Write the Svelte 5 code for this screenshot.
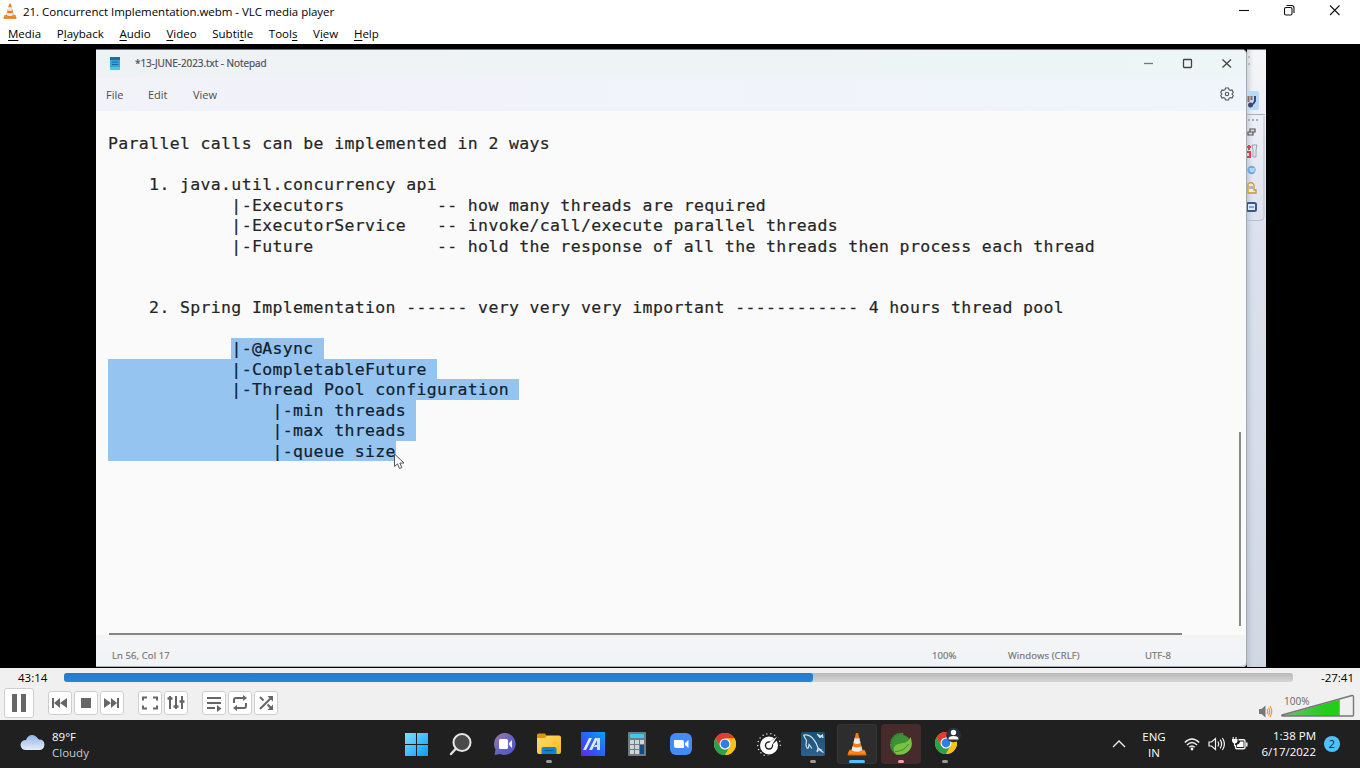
<script>
  const menus = [
    ['', 'M', 'edia'],
    ['P', 'l', 'ayback'],
    ['', 'A', 'udio'],
    ['', 'V', 'ideo'],
    ['Subti', 't', 'le'],
    ['Tool', 's', ''],
    ['V', 'i', 'ew'],
    ['', 'H', 'elp']
  ];
  const sp = (n) => ' '.repeat(n);
  const lines = [
    ['Parallel calls can be implemented in 2 ways', ''],
    ['', ''],
    [sp(4) + '1. java.util.concurrency api', ''],
    [sp(12) + '|-Executors' + sp(9) + '-- how many threads are required', ''],
    [sp(12) + '|-ExecutorService' + sp(3) + '-- invoke/call/execute parallel threads', ''],
    [sp(12) + '|-Future' + sp(12) + '-- hold the response of all the threads then process each thread', ''],
    ['', ''],
    ['', ''],
    [sp(4) + '2. Spring Implementation ------ very very very important ------------ 4 hours thread pool', ''],
    ['', ''],
    [sp(12), '|-@Async '],
    ['', sp(12) + '|-CompletableFuture '],
    ['', sp(12) + '|-Thread Pool configuration '],
    ['', sp(16) + '|-min threads '],
    ['', sp(16) + '|-max threads '],
    ['', sp(16) + '|-queue size']
  ];
  const apps = ['start', 'search', 'chat', 'files', 'ma', 'calc', 'zoom', 'chrome', 'gauge', 'mysql', 'vlc', 'spring', 'chrome2'];
  const running = { files: 'dot', mysql: 'dot', vlc: 'active', spring: 'alert', chrome2: 'dot' };
  const ticks = Array.from({ length: 14 }, (_, i) => 95 + i * 20.5);
  const teeth = Array.from({ length: 12 }, (_, i) => 120 + i * 14);
</script>

{#snippet cone()}
  <path d="M3 18.6h18l2.2 4.6q.3 1.3-.9 1.3H1.700q-1.200 0-.9-1.300z" fill="#e86c09" />
  <path d="M2.600 19.500h18.800l1 3H1.600z" fill="#ff9417" />
  <path d="M10.600 1.500q1.400-1.200 2.800 0l5.400 18.600q-6.800 4-13.600 0z" fill="#f47b0c" />
  <path d="M9.200 6.200q2.800 1.200 5.600 0l1.500 5.200q-4.300 2-8.600 0z" fill="#e9ebec" />
  <path d="M6.700 14.900q5.300 2.500 10.600 0l1.200 4q-6.500 3.400-13 0z" fill="#e9ebec" />
  <path d="M14.200 6.400l.6-.2 3.700 12.700-2.300 1z" fill="#999" opacity=".25" />
{/snippet}

{#snippet chromeLogo()}
  <circle cx="12" cy="12" r="11" fill="#fbc116" />
  <path d="M2.470 6.500A11 11 0 0 1 21.530 6.500H12L7.240 14.750z" fill="#e33b2e" />
  <path d="M2.470 6.500A11 11 0 0 0 12 23L16.760 14.750 12 17.500 7.240 14.750z" fill="#2aa24c" />
  <path d="M12 6.500h9.530A11 11 0 0 1 12 23l4.760-8.250z" fill="#fbc116" />
  <circle cx="12" cy="12" r="5.500" fill="#fff" />
  <circle cx="12" cy="12" r="4.400" fill="#2f7de9" />
{/snippet}

<div class="screen">
  <header class="titlebar">
    <svg class="logo" width="14" height="16" viewBox="0 0 24 25" preserveAspectRatio="none">{@render cone()}</svg>
    <span class="title">21. Concurrenct Implementation.webm - VLC media player</span>
    <svg class="winbtns" width="110" height="20" fill="none" stroke="#111" stroke-width="1.100">
      <path d="M4 10.500h10" />
      <rect x="49.500" y="7.500" width="7.500" height="7.500" rx="1.500" />
      <path d="M51.500 5.500h5q2.500 0 2.500 2.500v5" />
      <path d="M95 5.500l9.500 9.500M104.500 5.500l-9.500 9.500" />
    </svg>
  </header>

  <nav class="menubar">
    {#each menus as [a, b, c]}
      <span class="menu">{a}<u>{b}</u>{c}</span>
    {/each}
  </nav>

  <main class="video">
    <section class="notepad">
      <div class="np-title">
        <svg class="np-icon" width="12" height="15">
          <path d="M1 2h10v12H1z" fill="#37a4d5" /><path d="M1 1h10v3H1z" fill="#1b6f9c" /><path d="M3 6h6M3 8.500h6" stroke="#176c98" /><path d="M1 11h10v3H1z" fill="#4cc4ec" />
        </svg>
        <span class="np-name">*13-JUNE-2023.txt - Notepad</span>
        <svg class="np-btns" width="100" height="20" fill="none" stroke="#444" stroke-width="1.300">
          <path d="M4 10.500h9" stroke="#777" />
          <rect x="43.500" y="6.500" width="8" height="8" rx=".8" />
          <path d="M82.500 6.500l8.500 8M91 6.500l-8.500 8" />
        </svg>
      </div>
      <div class="np-menu">
        <span class="f">File</span><span class="e">Edit</span><span class="v">View</span>
        <svg class="gear" width="14" height="14" viewBox="0 0 14 14" fill="none" stroke="#555" stroke-width="1.100">
          <path d="M5.500 1h3l.5 1.700 1.300.7 1.700-.4 1.300 2.500L12 7l1.300 1.500L12 11l-1.700-.4-1.300.7-.5 1.700h-3L5 11.300l-1.300-.7L2 11 .7 8.500 2 7 .7 5.500 2 3l1.700.4L5 2.700z" />
          <circle cx="7" cy="7" r="1.700" />
        </svg>
      </div>
      <div class="np-body">
        <div class="text">
          {#each lines as [plain, selected]}
            <div class="line"><span>{plain}</span><span class="sel">{selected}</span></div>
          {/each}
        </div>
        <div class="vbar"></div>
      </div>
      <div class="hbar"></div>
      <footer class="status">
        <span class="pos">Ln 56, Col 17</span><span class="pct">100%</span><span class="crlf">Windows (CRLF)</span><span class="utf">UTF-8</span>
      </footer>
      <svg class="cursor" width="13" height="18" viewBox="0 0 13 18">
        <path d="M1.500 1v12.500l3-2.700 2 4.700 2.300-1-2-4.500h4.200z" fill="#fff" stroke="#555" />
      </svg>
    </section>
    <aside class="ide">
      <svg width="19" height="172">
        <path d="M1 7h2M1 14h2" stroke="#999" />
        <rect x="-3" y="41" width="15" height="19" rx="2" fill="#b9daf7" />
        <path d="M1.500 46v6M4.500 46v4" stroke="#8a6a58" stroke-width="2" /><path d="M8 46v5q-1 3-4 4" stroke="#34498c" stroke-width="2" fill="none" /><circle cx="3.500" cy="55" r="2.500" fill="#4a4468" />
        <path d="M0 64.500h18" stroke="#a9b1bd" />
        <path d="M1 70h2m2 0h2m2 0h2" stroke="#999" stroke-width="1.500" />
        <path d="M3 79h5v3H3zM1 82h5v3H1z" fill="#ddd" stroke="#555" stroke-width="1.200" />
        <path d="M0 97h4M2 95v5M0 102h3v5H0" stroke="#dc3f4d" stroke-width="2" fill="none" /><path d="M5 95h5l-1 5v7H6v-7z" fill="#e5e7ee" stroke="#9aa0b4" />
        <circle cx="4.500" cy="120" r="4.200" fill="#6eaadb" /><path d="M2 119h6M3 121h5M4 118v4M6 118v4" stroke="#e5f2ff" stroke-width=".7" />
        <path d="M1 134q4-3 6 1v5h2v3H1z" fill="#f4eccd" stroke="#c59b34" stroke-width="1.300" /><path d="M3 136v3M5 136v3" stroke="#5b88b5" />
        <rect x="0" y="153" width="9" height="8" rx="1.500" fill="#dce9fb" stroke="#385887" stroke-width="2" /><path d="M2 157h5" stroke="#385887" />
        <path d="M0 170.500h13q4 0 4-4V66" stroke="#b8bfca" fill="none" />
      </svg>
    </aside>
  </main>

  <section class="player">
    <div class="seek">
      <span class="elapsed">43:14</span>
      <div class="track"><div class="played"></div></div>
      <span class="remain">-27:41</span>
    </div>
    <div class="controls">
      <button class="big" aria-label="Pause"><svg width="28" height="28"><path d="M7 5h5v18H7zM16 5h5v18h-5z" fill="#666" /></svg></button>
      <div class="group">
        <button aria-label="Previous"><svg width="22" height="22"><path d="M3 6h2v10H3zM11 6v10l-6-5zM18 6v10l-7-5z" fill="#666" /></svg></button>
        <button aria-label="Stop"><svg width="22" height="22"><path d="M6 6h10v10H6z" fill="#666" /></svg></button>
        <button aria-label="Next"><svg width="22" height="22"><path d="M16 6h2v10h-2zM10 6v10l6-5zM3 6v10l7-5z" fill="#666" /></svg></button>
      </div>
      <div class="group">
        <button aria-label="Fullscreen"><svg width="22" height="22" fill="none" stroke="#666" stroke-width="2"><path d="M4 8.500V5.500h4M14 5.500h4v3M18 13.500v3h-4M8 16.500H4v-3" /></svg></button>
        <button aria-label="Settings"><svg width="22" height="22" fill="none" stroke="#666" stroke-width="2"><path d="M5 4v13M11 4v13M17 4v13" /><path d="M2.500 6.500h5M8.500 14.500h5M14.500 9.500h5" stroke-width="2.500" /></svg></button>
      </div>
      <div class="group">
        <button aria-label="Playlist"><svg width="22" height="22" fill="none" stroke="#666" stroke-width="2"><path d="M4 6h14M4 11h14M4 16h8" /><path d="M14 13l4.500 3.500-4.500 3.500z" fill="#666" stroke="none" /></svg></button>
        <button aria-label="Loop"><svg width="22" height="22" fill="none" stroke="#666" stroke-width="2"><path d="M5 11V8q0-2 2-2h8M17 11v3q0 2-2 2H7" /><path d="M14 3l4 3-4 3zM8 13l-4 3 4 3z" fill="#666" stroke="none" /></svg></button>
        <button aria-label="Shuffle"><svg width="22" height="22" fill="none" stroke="#666" stroke-width="2"><path d="M5 5l3.500 3.500M12.500 12.500l4 4M5 17L16.500 5.500" /><path d="M12.500 4H18v5.500zM12.500 18H18v-5.500z" fill="#666" stroke="none" /></svg></button>
      </div>
      <div class="volume">
        <svg class="speaker" width="14" height="13" fill="none"><path d="M0 4h2.500L6.500.5v12L2.500 9H0z" fill="#777" /><path d="M8 4q1.500 2.500 0 5M9.500 2.500q2.500 4 0 8M11 1q3.500 5.500 0 11" stroke="#ed9a32" stroke-width="1.200" /></svg>
        <div class="wedge">
          <svg width="75" height="24">
            <defs><linearGradient id="vol"><stop offset="0" stop-color="#75b975" /><stop offset=".75" stop-color="#22cd1d" /><stop offset=".97" stop-color="#20d018" /><stop offset="1" stop-color="#a1c718" /></linearGradient></defs>
            <path d="M2 21.500L60 5.500V22H2z" fill="url(#vol)" />
            <path d="M2 21L72 1.500q1.500-.3 1.500 1.500v18q0 1-1 1H3q-2 0-1-1z" fill="none" stroke="#777" stroke-width="1.400" />
          </svg>
          <span>100%</span>
        </div>
      </div>
    </div>
  </section>

  <footer class="taskbar">
    <div class="weather">
      <svg width="25" height="17" viewBox="0 0 25 17">
        <defs><linearGradient id="cl" x2="0" y2="1"><stop offset="0" stop-color="#8db4ea" /><stop offset="1" stop-color="#e6edf7" /></linearGradient></defs>
        <path d="M6 6Q8 1 12 1t6.500 4.500Q24 5 24.500 10.500 24 16 19 16H6Q1 16 .5 11 1 6 6 6z" fill="url(#cl)" />
        <path d="M7 6q4 0 6 4 2-4 6-4.300" stroke="#b5cbec" fill="none" />
      </svg>
      <div class="wtext"><span class="deg">89°F</span><span class="cloudy">Cloudy</span></div>
    </div>

    <div class="apps">
      {#each apps as app}
        <div class="app {app}">
          {#if app === 'start'}
            <svg width="24" height="24"><defs><linearGradient id="win" x2="1" y2="1"><stop offset="0" stop-color="#80deff" /><stop offset="1" stop-color="#0c9af5" /></linearGradient></defs><path d="M0 1h11v11H0zM12 1h11v11H12zM0 13h11v11H0zM12 13h11v11H12z" fill="url(#win)" /></svg>
          {:else if app === 'search'}
            <svg width="24" height="24" fill="none"><path d="M7 16.500L2 22" stroke="#ddd" stroke-width="2.500" stroke-linecap="round" /><circle cx="13" cy="10.500" r="8.500" fill="#4a4a4a" stroke="#e7e7e7" stroke-width="2" /></svg>
          {:else if app === 'chat'}
            <svg width="24" height="24"><defs><linearGradient id="chat" x2="1" y2="1"><stop offset="0" stop-color="#a877a5" /><stop offset=".5" stop-color="#6465bb" /><stop offset="1" stop-color="#5055cf" /></linearGradient></defs><path d="M12 1a11 11 0 1 1-5 21l-5.500 1 1-5.500A11 11 0 0 1 12 1z" fill="url(#chat)" /><rect x="6" y="7" width="9" height="10" rx="1.500" fill="#fff" /><path d="M16 11l3-3v8l-3-3z" fill="#eee" /></svg>
          {:else if app === 'files'}
            <svg width="24" height="24"><defs><linearGradient id="fold" x2="1" y2="1"><stop stop-color="#ffde72" /><stop offset="1" stop-color="#fab817" /></linearGradient></defs><path d="M0 3q0-1.500 1.500-1.500H8l2 2.500v3H0z" fill="#dc9600" /><path d="M0 6h8l2-2.500h12q2 0 2 2V20q0 2-2 2H2q-2 0-2-2z" fill="url(#fold)" /><path d="M4.500 22v-5q0-2 2-2h11q2 0 2 2v5z" fill="#1283cd" /><path d="M7.500 18.500h9" stroke="#0b5a9c" stroke-width="1.200" /></svg>
          {:else if app === 'ma'}
            <svg width="24" height="24"><defs><linearGradient id="mag" y1="1" x2="1" y2="0"><stop stop-color="#6126f0" /><stop offset=".5" stop-color="#2863f6" /><stop offset="1" stop-color="#05a5f7" /></linearGradient></defs><path d="M0 0h24v24H0z" fill="url(#mag)" /><path d="M2 18L8 6h3L5 18zM8 18l6-12h3l-6 12z" fill="#e2eaff" /><path d="M17 6h2v12h-3v-3h-3l1-2h2V8z" fill="#d3e3ff" /></svg>
          {:else if app === 'calc'}
            <svg width="24" height="24"><rect x="3" width="18" height="24" rx="1" fill="#6f7c82" /><path d="M5 2h14v4H5z" fill="#3bc9f3" /><path d="M5 8h4v4H5zM10 8h4v4h-4zM15 8h4v4h-4zM5 13h4v4H5zM10 13h4v4h-4zM5 18h4v4H5zM10 18h4v4h-4z" fill="#cfd4d6" /><path d="M15 13h4v9h-4z" fill="#0d4d88" /></svg>
          {:else if app === 'zoom'}
            <svg width="24" height="24"><rect x="1" y="1" width="22" height="22" rx="6" fill="#438cf7" /><path d="M5 8h8q2 0 2 2v6H7q-2 0-2-2zM16 11l3.500-3v8L16 13z" fill="#fff" /></svg>
          {:else if app === 'chrome'}
            <svg width="24" height="24">{@render chromeLogo()}</svg>
          {:else if app === 'gauge'}
            <svg width="24" height="24">
              {#each ticks as t}<circle cx={12 + 11.300 * Math.cos(t * Math.PI / 180)} cy={13 + 11.300 * Math.sin(t * Math.PI / 180)} r=".75" fill="#ddd" />{/each}
              <circle cx="12" cy="13.500" r="9" fill="#fff" /><circle cx="12" cy="13.500" r="4.200" fill="#222" /><path d="M12 13.500l9-8.500" stroke="#222" stroke-width="3.500" /><path d="M10.500 12l9.500-7.500-6 10z" fill="#fff" /><circle cx="12" cy="13.500" r="2.800" fill="#fff" />
            </svg>
          {:else if app === 'mysql'}
            <svg width="24" height="24"><defs><linearGradient id="my" x2="0" y2="1"><stop stop-color="#1c5274" /><stop offset="1" stop-color="#2a6291" /></linearGradient></defs><rect width="24" height="24" rx="2" fill="url(#my)" /><path d="M2.500 3Q9 2 13 8q3 3.500 4 8l-1 4 2-2.500 4.500 3M17 16l4 2.500M2.500 3q1.500 3 3 5.500L5 13q1 5 2.500 2.500L8 12.500l3 4" fill="none" stroke="#d4e2ec" stroke-width="1.200" /><path d="M16 2l3 1.500L22 6l-.5-3.500L20 4l-1 2z" fill="#d9e4eb" stroke="#d9e4eb" /></svg>
          {:else if app === 'vlc'}
            <svg width="20" height="24" viewBox="0 0 24 25" preserveAspectRatio="none">{@render cone()}</svg>
          {:else if app === 'spring'}
            <svg width="24" height="24">
              {#each teeth as t}<rect x="21" y="11" width="3" height="2.400" fill="#3c8c34" transform="rotate({t} 12.500 12.300)" />{/each}
              <circle cx="12.500" cy="12.500" r="9.700" fill="#3f9137" /><path d="M21.500 5q3.500 9-2 14-5.500 5-12 3.500-4-2.500-2.500-7 2-4 8-4.300 6-.2 8.500-6.200z" fill="#78c143" /><path d="M6 19.500q9 0 13.500-7.500" stroke="#3f8d31" fill="none" />
            </svg>
          {:else}
            <svg class="profile" width="28" height="28" viewBox="-1 -3 28 28">{@render chromeLogo()}<circle cx="19.500" cy="4" r="7.300" fill="#26323d" /><circle cx="19.500" cy="1.500" r="2.700" fill="#fff" /><path d="M14.500 8q0-3 5-3t5 3v.5h-10z" fill="#fff" /></svg>
          {/if}
          {#if running[app]}<i class="run {running[app]}"></i>{/if}
        </div>
      {/each}
    </div>

    <div class="tray">
      <svg class="chev" width="14" height="10" fill="none" stroke="#eee" stroke-width="1.400"><path d="M1 8l6-6 6 6" /></svg>
      <div class="lang"><span>ENG</span><span>IN</span></div>
      <svg class="sys" width="64" height="18" fill="none" stroke="#f3f3f3" stroke-width="1.400">
        <path d="M.8 7.500q7.200-7 14.400 0M3 10q5-5 10 0M5.300 12.300q2.700-2.700 5.400 0" /><circle cx="8" cy="14" r="1.400" fill="#fff" stroke="none" />
        <path d="M25 7h2.500l4-3.500v11l-4-3.500H25z" stroke-width="1.200" /><path d="M34 6.500q1.500 2.500 0 5M36.200 4.700q2.800 4.300 0 8.600M38.400 3q4 6 0 12" stroke-width="1.200" />
        <path d="M54.500 4.700h5q1.500 0 1.500 1.500v6q0 1.500-1.500 1.500H53q-1.500 0-1.500-1.500V10" /><path d="M56 6.500h3.500V12H53V9.500q2.500 0 3-3z" fill="#fff" stroke="none" /><path d="M62.800 7.500v4" stroke-width="1.500" /><path d="M49.200 2v3M52 2v3M50.500 7v4" stroke-width="1.100" /><path d="M48 4h5.500v2q-.5 2.500-2.700 2.500T48 6z" fill="#fff" stroke="none" />
      </svg>
      <div class="clock"><span class="time">1:38 PM</span><span class="date">6/17/2022</span></div>
      <b class="badge">2</b>
    </div>
  </footer>
</div>

<style>
  :global(body) { margin: 0; overflow: hidden; }
  .screen { width: 1360px; height: 768px; display: flex; flex-direction: column; font-family: "Open Sans", "Noto Sans", sans-serif; font-size: 12px; color: #000; background: #fff; overflow: hidden; }
  svg { display: block; flex: none; }
  span { white-space: pre; }
  .titlebar { height: 23px; display: flex; align-items: center; padding-left: 3px; flex: none; }
  .logo { margin-top: -1px; }
  .title { margin-left: 6px; font-size: 11.500px; line-height: 23px; letter-spacing: -.03px; }
  .winbtns { margin-left: auto; margin-right: 15px; margin-top: -3px; }
  .menubar { height: 21px; display: flex; padding-left: 8px; gap: 15.700px; flex: none; line-height: 21px; font-size: 11.500px; }
  .menu u { text-decoration: underline; text-underline-offset: 2px; text-decoration-thickness: 1px; }
  .video { height: 624px; flex: none; background: #000; display: flex; box-sizing: border-box; padding: 5px 94px 1px 96px; }
  .notepad { width: 1151px; height: 618px; box-sizing: border-box; border-top: 1px solid #6c7577; border-right: 1px solid #a3aab0; border-radius: 0 5px 4px 0; background: #fafafa; position: relative; display: flex; flex-direction: column; color: #4b4d50; z-index: 1; }
  .np-title { height: 27px; display: flex; align-items: center; background: linear-gradient(90deg, #eff2f5, #edf5f6); border-radius: 0 4px 0 0; }
  .np-icon { margin-left: 13px; }
  .np-name { margin-left: 14px; font-size: 10px; letter-spacing: -.06px; margin-top: -1px; -webkit-text-stroke: .2px; }
  .np-btns { margin-left: auto; margin-right: 6px; margin-top: -1px; }
  .np-menu { height: 34px; display: flex; align-items: center; padding-left: 10px; background: linear-gradient(90deg, #f2f2f9, #eff5fb); font-size: 11px; }
  .np-menu .f { width: 42px; }
  .np-menu .e { width: 45px; }
  .gear { margin-left: auto; margin-right: 12px; }
  .np-body { height: 522px; display: flex; }
  .text { padding: 22px 0 0 12px; font-family: "DejaVu Sans Mono", monospace; font-size: 16.500px; letter-spacing: .347px; color: #252525; width: 1143px; box-sizing: border-box; -webkit-text-stroke: .2px; }
  .line { height: 20.500px; line-height: 22px; display: flex; }
  .sel { background: #95c4f0; color: #10202e; }
  .vbar { width: 2px; height: 194px; margin-top: 321px; background: #8a8a8a; }
  .hbar { height: 2px; width: 1073px; margin-left: 13px; background: #858585; }
  .status { flex: 1; display: flex; align-items: center; background: linear-gradient(#f4f4f4, #f0f4f7); font-size: 9.500px; color: #777; padding: 10px 0 0 16px; box-sizing: border-box; border-bottom: 1px solid #9fb2bd; border-radius: 0 0 5px 0; letter-spacing: .1px; -webkit-text-stroke: .2px; }
  .pos { width: 820px; }
  .pct { width: 76px; }
  .crlf { width: 137px; }
  .cursor { position: absolute; left: 297px; top: 403px; }
  .ide { width: 19px; height: 618px; background: linear-gradient(#f6f6f6 0, #eceff7 70px, #dce1ed 180px, #d1d8e4); box-sizing: border-box; border-top: 1px solid #6c7577; box-shadow: inset 5px 0 5px -3px #9aa6b888; }
  .player { height: 52px; flex: none; background: #f0f0f0; display: flex; flex-direction: column; }
  .seek { height: 18px; display: flex; align-items: center; font-size: 11.500px; }
  .elapsed { width: 46px; padding-left: 18px; padding-top: 1px; }
  .track { width: 1229px; height: 9px; background: linear-gradient(#b8b8b8, #d5d5d5); border-radius: 3px; }
  .played { width: 749px; height: 9px; background: linear-gradient(#287ac6, #2984d8); border-radius: 3px; }
  .remain { margin-left: 28px; padding-top: 1px; }
  .controls { height: 34px; display: flex; align-items: center; padding-left: 4px; box-sizing: border-box; }
  .controls > .big, .controls > .group { margin-bottom: 0; }
  button { width: 24px; height: 24px; padding: 0; border: 1px solid #cecece; border-radius: 3px; background: #fff; box-sizing: border-box; }
  .big { width: 30px; height: 30px; margin-right: 14px; }
  .group { display: flex; gap: 2px; margin-right: 14px; }
  .volume { margin-left: auto; margin-right: 5px; display: flex; align-items: flex-end; gap: 7px; height: 29px; }
  .wedge { position: relative; }
  .wedge span { position: absolute; left: 4px; top: 1px; font-size: 10px; line-height: 12px; color: #666; }
  .taskbar { height: 48px; flex: none; background: #202020; color: #fff; display: flex; align-items: center; }
  .weather { width: 395px; display: flex; align-items: center; padding-left: 20px; box-sizing: border-box; gap: 7px; }
  .weather svg { margin-top: -3px; }
  .wtext, .lang, .clock { display: flex; flex-direction: column; line-height: 16px; font-size: 11.500px; }
  .wtext { padding-top: 2px; }
  .lang { padding-top: 1px; }
  .clock { padding-top: 0; }
  .cloudy { color: #ccc; }
  .apps { display: flex; gap: 4px; padding-left: 2px; }
  .app { width: 40px; height: 40px; position: relative; display: flex; align-items: center; justify-content: center; border-radius: 4px; }
  .app.vlc { background: #2d2d2d; box-shadow: inset 0 0 0 1px #363636; }
  .app.spring { background: #472a2c; }
  .profile { margin: -4px 0 0 3px; }
  .run { position: absolute; bottom: 1px; left: 17px; width: 6px; height: 3px; border-radius: 2px; background: #9a9a9a; }
  .run.active { left: 12px; width: 16px; background: #4cc2ff; }
  .run.alert { background: #ff99a4; }
  .tray { margin-left: auto; display: flex; align-items: center; padding-right: 20px; }
  .lang { width: 40px; align-items: center; margin-left: 8px; }
  .sys { margin-left: 10px; }
  .clock { width: 68px; align-items: flex-end; }
  .badge { width: 16px; height: 16px; margin-left: 8px; border-radius: 50%; background: #4cc2ff; color: #123; font-weight: 400; font-size: 11px; line-height: 16px; text-align: center; }
</style>
